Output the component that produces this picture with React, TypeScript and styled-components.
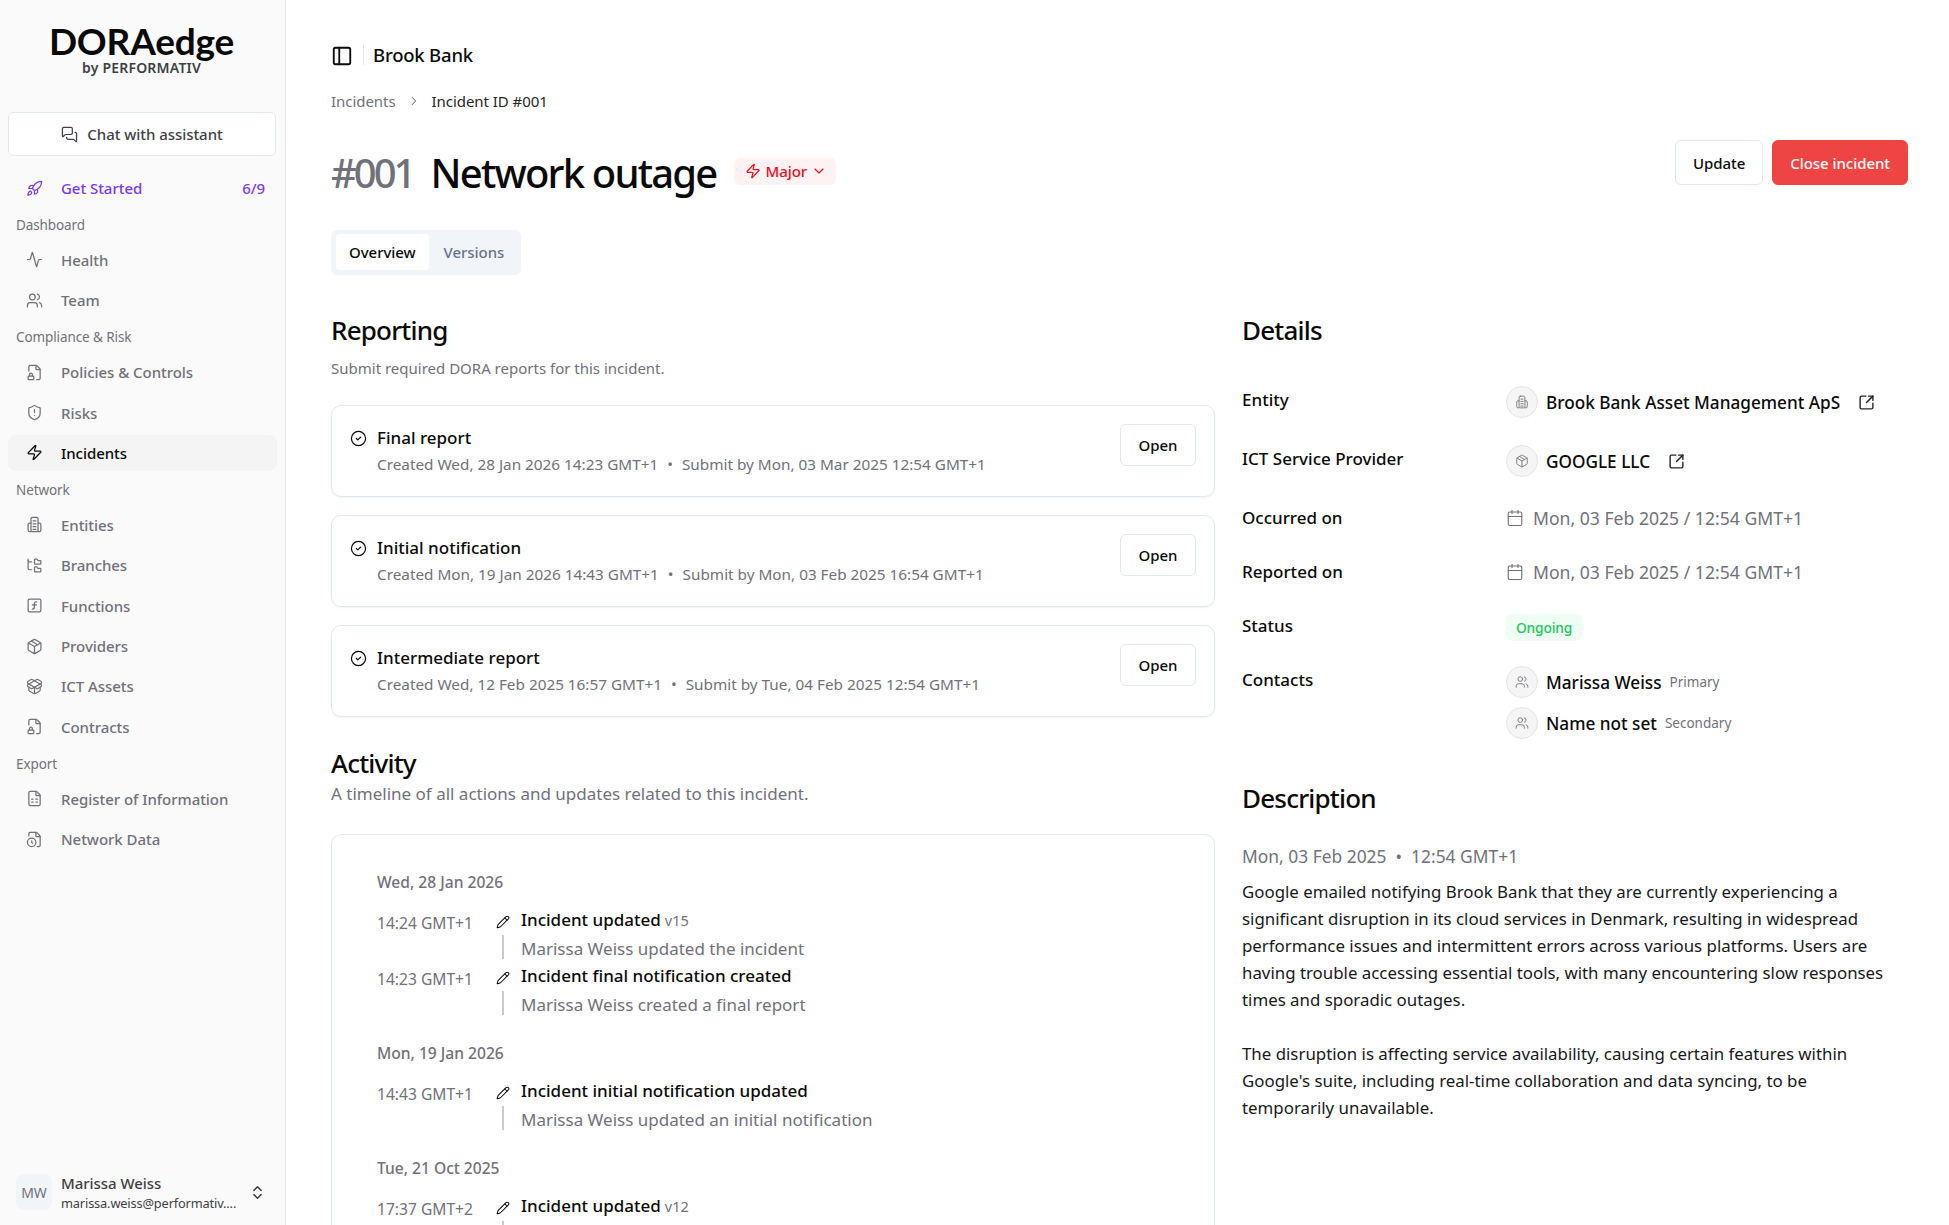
import React from 'react';
import styled, { createGlobalStyle } from 'styled-components';
import {
  Activity,
  Calendar,
  ChevronDown,
  ChevronRight,
  ChevronsUpDown,
  CircleCheck,
  FileClock,
  FileLock2,
  FileSpreadsheet,
  FolderTree,
  MessagesSquare,
  Package,
  PackageOpen,
  PanelLeft,
  Pencil,
  Rocket,
  ShieldAlert,
  SquareArrowOutUpRight,
  SquareFunction,
  Users,
  Zap,
} from 'lucide-react';

const GlobalStyle = createGlobalStyle`
  html, body, #root {
    margin: 0;
    height: 100%;
  }
  body {
    font-family: 'Noto Sans', 'Open Sans', sans-serif;
    color: #0a0a0a;
    background: #ffffff;
    overflow: hidden;
  }
  * {
    box-sizing: border-box;
  }
`;

const Page = styled.div`
  display: flex;
  height: 1225px;
  overflow: hidden;
`;

const Sidebar = styled.aside`
  width: 286px;
  flex: none;
  display: flex;
  flex-direction: column;
  background: #fafafa;
  border-right: 1px solid #e5e5e5;
  padding: 0 8px;
`;

const Logo = styled.div`
  height: 112px;
  padding-top: 23px;
  padding-right: 2px;
  display: flex;
  flex-direction: column;
  align-items: center;
`;

const LogoMark = styled.div`
  font-family: 'Lato', sans-serif;
  font-size: 37px;
  line-height: 36px;
  font-weight: 700;
  color: #0a0a0a;
  letter-spacing: -0.2px;
`;

const LogoSub = styled.div`
  font-size: 14px;
  line-height: 18px;
  font-weight: 600;
  letter-spacing: 0.2px;
  color: #3f3f46;
`;

const ChatButton = styled.button`
  height: 44px;
  width: 268px;
  flex: none;
  display: flex;
  align-items: center;
  justify-content: center;
  gap: 9px;
  background: #ffffff;
  border: 1px solid #e2e8f0;
  border-radius: 6px;
  font: inherit;
  font-size: 15px;
  font-weight: 500;
  letter-spacing: -0.05px;
  color: #3f3f46;
`;

const NavList = styled.nav`
  display: flex;
  flex-direction: column;
  margin-top: 14px;
  flex: 1;
`;

const GroupLabel = styled.div`
  height: 31.5px;
  padding: 0 0 2px 8px;
  display: flex;
  align-items: center;
  font-size: 13.5px;
  letter-spacing: -0.1px;
  color: #71717a;
`;

const NavItem = styled.div<{ $active?: boolean; $accent?: boolean }>`
  height: 36px;
  flex: none;
  display: flex;
  align-items: center;
  gap: 18px;
  padding: 0 12px 0 18px;
  margin-bottom: 4.4px;
  border-radius: 8px;
  font-size: 15px;
  font-weight: 500;
  letter-spacing: -0.05px;
  color: ${(p) => (p.$accent ? '#7c3aed' : p.$active ? '#0a0a0a' : '#71717a')};
  background: ${(p) => (p.$active ? '#f4f4f5' : 'transparent')};

  svg {
    flex: none;
  }
`;

const NavCount = styled.span`
  margin-left: auto;
`;

const UserRow = styled.div`
  height: 64px;
  padding: 0 0 2px 8px;
  display: flex;
  align-items: center;
  gap: 9px;
  color: #3f3f46;
`;

const UserAvatar = styled.div`
  width: 36px;
  height: 36px;
  flex: none;
  border-radius: 8px;
  background: #f1f5f9;
  color: #71717a;
  font-size: 14px;
  display: flex;
  align-items: center;
  justify-content: center;
`;

const UserText = styled.div`
  width: 179px;
  flex: none;
  margin-top: 2px;
  display: flex;
  flex-direction: column;
`;

const UserName = styled.div`
  font-size: 15px;
  line-height: 20px;
  font-weight: 500;
  letter-spacing: -0.05px;
`;

const UserEmail = styled.div`
  font-size: 12.8px;
  line-height: 20px;
  letter-spacing: -0.15px;
  white-space: nowrap;
`;

const Main = styled.main`
  flex: 1;
  min-width: 0;
  padding: 0 41px 0 45px;
`;

const TopBar = styled.div`
  height: 110px;
  padding-top: 45px;
  display: flex;
  align-items: flex-start;
  gap: 10px;
`;

const TopTitle = styled.div`
  font-size: 18.5px;
  line-height: 20px;
  font-weight: 500;
  letter-spacing: -0.2px;
  border-left: 1px solid #e5e5e5;
  padding-left: 9px;
`;

const Breadcrumb = styled.div`
  height: 22px;
  margin-top: -20px;
  display: flex;
  align-items: center;
  gap: 11px;
  font-size: 15px;
  letter-spacing: -0.05px;
  color: #71717a;

  strong {
    font-weight: 400;
    color: #27272a;
  }
`;

const TitleRow = styled.div`
  height: 90.5px;
  margin-top: 28px;
  display: flex;
  align-items: flex-start;
  justify-content: space-between;
`;

const TitleLeft = styled.div`
  display: flex;
  align-items: center;
  gap: 18px;
  height: 50px;
  margin-top: 8px;
`;

const Title = styled.h1`
  margin: 0;
  font-size: 40px;
  line-height: 50px;
  font-weight: 500;
  letter-spacing: -1.8px;

  span {
    color: #71717a;
    letter-spacing: -3px;
    margin-right: 17px;
  }
`;

const SeverityBadge = styled.div`
  height: 27px;
  padding: 0 9px 0 11px;
  display: flex;
  align-items: center;
  gap: 4px;
  margin-top: -4px;
  border-radius: 6px;
  background: #fef2f2;
  color: #ee0a1a;
  font-size: 15px;
  font-weight: 500;
  letter-spacing: -0.05px;
`;

const Actions = styled.div`
  display: flex;
  gap: 9px;
`;

const ActionButton = styled.button<{ $danger?: boolean }>`
  height: 45px;
  padding: 0 17px;
  border-radius: 6px;
  border: 1px solid ${(p) => (p.$danger ? '#ef4444' : '#e2e8f0')};
  background: ${(p) => (p.$danger ? '#ef4444' : '#ffffff')};
  color: ${(p) => (p.$danger ? '#ffffff' : '#0a0a0a')};
  font: inherit;
  font-size: 15px;
  font-weight: 500;
  letter-spacing: -0.05px;
`;

const TabList = styled.div`
  width: 190px;
  height: 45px;
  margin-top: -1px;
  padding: 4px 5px;
  display: flex;
  background: #f1f5f9;
  border-radius: 6px;
`;

const TabItem = styled.div<{ $active?: boolean }>`
  height: 36px;
  padding: 0 13px 0 ${(p) => (p.$active ? '13px' : '15px')};
  display: flex;
  align-items: center;
  border-radius: 4px;
  font-size: 15px;
  font-weight: 500;
  letter-spacing: -0.05px;
  background: ${(p) => (p.$active ? '#ffffff' : 'transparent')};
  color: ${(p) => (p.$active ? '#0a0a0a' : '#64748b')};
`;

const Columns = styled.div`
  display: grid;
  grid-template-columns: 884px 1fr;
  column-gap: 27px;
  margin-top: 35px;
`;

const Column = styled.section`
  min-width: 0;
`;

const Heading = styled.h2`
  margin: 0;
  font-size: 26px;
  line-height: 40px;
  font-weight: 500;
  letter-spacing: -0.8px;
`;

const Subtext = styled.p<{ $large?: boolean }>`
  margin: ${(p) => (p.$large ? '1px 0 0' : '8px 0 0')};
  color: #71717a;
  font-size: ${(p) => (p.$large ? '17px' : '15px')};
  line-height: 20px;
`;

const ReportStack = styled.div`
  margin-top: 27px;
  display: flex;
  flex-direction: column;
  gap: 18px;
`;

const ReportCard = styled.div`
  height: 92px;
  padding: 0 18px;
  display: flex;
  align-items: center;
  justify-content: space-between;
  border: 1px solid #e2e8f0;
  border-radius: 10px;
  box-shadow: 0 1px 2px rgba(15, 23, 42, 0.05);
`;

const ReportBody = styled.div`
  display: flex;
  flex-direction: column;
  gap: 5px;
`;

const ReportTitle = styled.div`
  display: flex;
  align-items: center;
  gap: 10px;
  font-size: 17px;
  line-height: 22px;
  font-weight: 500;
`;

const ReportMeta = styled.div`
  padding-left: 27px;
  font-size: 15.3px;
  line-height: 20px;
  color: #71717a;
`;

const MetaDot = styled.span`
  margin: 0 9px;
`;

const OpenButton = styled.button`
  width: 76px;
  height: 42px;
  align-self: flex-start;
  margin-top: 18px;
  border: 1px solid #e2e8f0;
  border-radius: 6px;
  background: #ffffff;
  font: inherit;
  font-size: 15px;
  font-weight: 500;
  letter-spacing: -0.05px;
  color: #0a0a0a;
`;

const ActivitySection = styled.div`
  margin-top: 26px;
`;

const TimelineCard = styled.div`
  margin-top: 30px;
  padding: 37px 45px 0;
  height: 600px;
  border: 1px solid #e2e8f0;
  border-radius: 10px;
`;

const DateGroup = styled.div`
  margin-bottom: 21.5px;
`;

const DateLabel = styled.div`
  font-size: 15.6px;
  line-height: 20px;
  font-weight: 500;
  color: #71717a;
  margin-bottom: 17.5px;
`;

const EventRow = styled.div`
  display: grid;
  grid-template-columns: 118px 26px 1fr;
  height: 56px;
`;

const EventTime = styled.div`
  font-size: 15.6px;
  line-height: 22px;
  color: #71717a;
  padding-top: 3px;
`;

const EventRail = styled.div`
  display: flex;
  flex-direction: column;
  align-items: flex-start;
  gap: 6px;

  svg {
    margin-top: 6px;
    margin-left: 1px;
  }
`;

const RailLine = styled.div`
  width: 2px;
  height: 24px;
  margin-left: 7px;
  background: #c9c9ce;
`;

const EventTitle = styled.div`
  font-size: 17px;
  line-height: 22px;
  font-weight: 500;

  span {
    font-size: 14.5px;
    font-weight: 400;
    color: #71717a;
    margin-left: 4px;
  }
`;

const EventText = styled.div`
  margin-top: 7px;
  font-size: 17px;
  line-height: 22px;
  color: #71717a;
`;

const DetailGrid = styled.div`
  margin-top: 39.5px;
  display: grid;
  grid-template-columns: 264px 1fr;
`;

const DetailLabel = styled.div<{ $h: number }>`
  height: ${(p) => p.$h}px;
  font-size: 17px;
  line-height: 22px;
  font-weight: 500;
`;

const DetailValue = styled.div<{ $h: number }>`
  height: ${(p) => p.$h}px;
  display: flex;
  flex-direction: column;
  gap: 9px;
  align-items: flex-start;
`;

const ValueLine = styled.div`
  display: flex;
  align-items: center;
  gap: 8px;
  margin-top: -3px;
  font-size: 17.2px;
  font-weight: 500;

  & + & {
    margin-top: 0;
  }

  small {
    font-size: 13.5px;
    font-weight: 400;
    color: #71717a;
  }

  a {
    margin-left: 10px;
    display: flex;
    color: #27272a;
  }
`;

const DateValue = styled.div`
  display: flex;
  align-items: center;
  gap: 9px;
  height: 22px;
  font-size: 17.6px;
  color: #71717a;
`;

const IconCircle = styled.div`
  width: 32px;
  height: 32px;
  flex: none;
  border-radius: 50%;
  border: 1px solid #e5e5e5;
  background: #f5f5f5;
  color: #71717a;
  display: flex;
  align-items: center;
  justify-content: center;
`;

const StatusBadge = styled.div`
  width: 76px;
  height: 27px;
  margin-top: -1px;
  display: flex;
  align-items: center;
  justify-content: center;
  border-radius: 6px;
  background: #f0fdf4;
  color: #22c55e;
  font-size: 13.8px;
  font-weight: 500;
  letter-spacing: -0.2px;
`;

const DescriptionSection = styled.div`
  margin-top: 23px;
`;

const DescriptionMeta = styled.div`
  margin-top: 27px;
  font-size: 17.4px;
  line-height: 22px;
  color: #71717a;
`;

const DescriptionText = styled.p`
  margin: 11px 0 27px;
  max-width: 655px;
  font-size: 16.85px;
  line-height: 27px;
  color: #18181b;
`;

// tower with two side wings, lucide has no exact match
const EntityIcon: React.FC<{ size?: number; strokeWidth?: number }> = ({ size = 17, strokeWidth = 1.5 }) => (
  <svg
    width={size}
    height={size}
    viewBox="0 0 24 24"
    fill="none"
    stroke="currentColor"
    strokeWidth={strokeWidth}
    strokeLinecap="round"
    strokeLinejoin="round"
  >
    <rect x="7" y="2" width="10" height="20" rx="2" />
    <path d="M7 10H5a2 2 0 0 0-2 2v8a2 2 0 0 0 2 2h2" />
    <path d="M17 10h2a2 2 0 0 1 2 2v8a2 2 0 0 1-2 2h-2" />
    <path d="M10 7h4M10 11h4M10 15h4M10 19h4" />
  </svg>
);

type NavEntry = { label: string; icon: React.ElementType; active?: boolean };

const navGroups: { title: string; items: NavEntry[] }[] = [
  {
    title: 'Dashboard',
    items: [
      { label: 'Health', icon: Activity },
      { label: 'Team', icon: Users },
    ],
  },
  {
    title: 'Compliance & Risk',
    items: [
      { label: 'Policies & Controls', icon: FileLock2 },
      { label: 'Risks', icon: ShieldAlert },
      { label: 'Incidents', icon: Zap, active: true },
    ],
  },
  {
    title: 'Network',
    items: [
      { label: 'Entities', icon: EntityIcon },
      { label: 'Branches', icon: FolderTree },
      { label: 'Functions', icon: SquareFunction },
      { label: 'Providers', icon: Package },
      { label: 'ICT Assets', icon: PackageOpen },
      { label: 'Contracts', icon: FileLock2 },
    ],
  },
  {
    title: 'Export',
    items: [
      { label: 'Register of Information', icon: FileSpreadsheet },
      { label: 'Network Data', icon: FileClock },
    ],
  },
];

const reports = [
  {
    title: 'Final report',
    created: 'Created Wed, 28 Jan 2026 14:23 GMT+1',
    submit: 'Submit by Mon, 03 Mar 2025 12:54 GMT+1',
  },
  {
    title: 'Initial notification',
    created: 'Created Mon, 19 Jan 2026 14:43 GMT+1',
    submit: 'Submit by Mon, 03 Feb 2025 16:54 GMT+1',
  },
  {
    title: 'Intermediate report',
    created: 'Created Wed, 12 Feb 2025 16:57 GMT+1',
    submit: 'Submit by Tue, 04 Feb 2025 12:54 GMT+1',
  },
];

type TimelineEvent = { time: string; title: string; version?: string; text?: string };

const timeline: { date: string; events: TimelineEvent[] }[] = [
  {
    date: 'Wed, 28 Jan 2026',
    events: [
      { time: '14:24 GMT+1', title: 'Incident updated', version: 'v15', text: 'Marissa Weiss updated the incident' },
      { time: '14:23 GMT+1', title: 'Incident final notification created', text: 'Marissa Weiss created a final report' },
    ],
  },
  {
    date: 'Mon, 19 Jan 2026',
    events: [
      { time: '14:43 GMT+1', title: 'Incident initial notification updated', text: 'Marissa Weiss updated an initial notification' },
    ],
  },
  {
    date: 'Tue, 21 Oct 2025',
    events: [{ time: '17:37 GMT+2', title: 'Incident updated', version: 'v12' }],
  },
];

const App: React.FC = () => {
  return (
    <Page>
      <GlobalStyle />
      <Sidebar>
        <Logo>
          <LogoMark>DORAedge</LogoMark>
          <LogoSub>by PERFORMATIV</LogoSub>
        </Logo>
        <ChatButton>
          <MessagesSquare size={17} strokeWidth={1.75} />
          Chat with assistant
        </ChatButton>
        <NavList>
          <NavItem $accent>
            <Rocket size={17} strokeWidth={1.75} />
            Get Started
            <NavCount>6/9</NavCount>
          </NavItem>
          {navGroups.map((group) => (
            <React.Fragment key={group.title}>
              <GroupLabel>{group.title}</GroupLabel>
              {group.items.map((item) => (
                <NavItem key={item.label} $active={item.active}>
                  <item.icon size={17} strokeWidth={1.75} />
                  {item.label}
                </NavItem>
              ))}
            </React.Fragment>
          ))}
        </NavList>
        <UserRow>
          <UserAvatar>MW</UserAvatar>
          <UserText>
            <UserName>Marissa Weiss</UserName>
            <UserEmail>marissa.weiss@performativ....</UserEmail>
          </UserText>
          <ChevronsUpDown size={17} strokeWidth={2} />
        </UserRow>
      </Sidebar>

      <Main>
        <TopBar>
          <PanelLeft size={22} strokeWidth={2} />
          <TopTitle>Brook Bank</TopTitle>
        </TopBar>
        <Breadcrumb>
          Incidents
          <ChevronRight size={14} strokeWidth={1.75} />
          <strong>Incident ID #001</strong>
        </Breadcrumb>

        <TitleRow>
          <TitleLeft>
            <Title>
              <span>#001</span>Network outage
            </Title>
            <SeverityBadge>
              <Zap size={16} strokeWidth={1.75} />
              Major
              <ChevronDown size={16} strokeWidth={1.75} />
            </SeverityBadge>
          </TitleLeft>
          <Actions>
            <ActionButton>Update</ActionButton>
            <ActionButton $danger>Close incident</ActionButton>
          </Actions>
        </TitleRow>

        <TabList>
          <TabItem $active>Overview</TabItem>
          <TabItem>Versions</TabItem>
        </TabList>

        <Columns>
          <Column>
            <Heading>Reporting</Heading>
            <Subtext>Submit required DORA reports for this incident.</Subtext>
            <ReportStack>
              {reports.map((report) => (
                <ReportCard key={report.title}>
                  <ReportBody>
                    <ReportTitle>
                      <CircleCheck size={17} strokeWidth={1.75} />
                      {report.title}
                    </ReportTitle>
                    <ReportMeta>
                      {report.created}
                      <MetaDot>•</MetaDot>
                      {report.submit}
                    </ReportMeta>
                  </ReportBody>
                  <OpenButton>Open</OpenButton>
                </ReportCard>
              ))}
            </ReportStack>

            <ActivitySection>
              <Heading>Activity</Heading>
              <Subtext $large>A timeline of all actions and updates related to this incident.</Subtext>
              <TimelineCard>
                {timeline.map((group) => (
                  <DateGroup key={group.date}>
                    <DateLabel>{group.date}</DateLabel>
                    {group.events.map((event) => (
                      <EventRow key={event.time}>
                        <EventTime>{event.time}</EventTime>
                        <EventRail>
                          <Pencil size={14} strokeWidth={1.75} />
                          <RailLine />
                        </EventRail>
                        <div>
                          <EventTitle>
                            {event.title}
                            {event.version && <span>{event.version}</span>}
                          </EventTitle>
                          {event.text && <EventText>{event.text}</EventText>}
                        </div>
                      </EventRow>
                    ))}
                  </DateGroup>
                ))}
              </TimelineCard>
            </ActivitySection>
          </Column>

          <Column>
            <Heading>Details</Heading>
            <DetailGrid>
              <DetailLabel $h={59}>Entity</DetailLabel>
              <DetailValue $h={59}>
                <ValueLine>
                  <IconCircle><EntityIcon size={14} strokeWidth={1.5} /></IconCircle>
                  Brook Bank Asset Management ApS
                  <a><SquareArrowOutUpRight size={17} strokeWidth={2} /></a>
                </ValueLine>
              </DetailValue>
              <DetailLabel $h={59}>ICT Service Provider</DetailLabel>
              <DetailValue $h={59}>
                <ValueLine>
                  <IconCircle><Package size={14} strokeWidth={1.5} /></IconCircle>
                  GOOGLE LLC
                  <a><SquareArrowOutUpRight size={17} strokeWidth={2} /></a>
                </ValueLine>
              </DetailValue>
              <DetailLabel $h={54}>Occurred on</DetailLabel>
              <DetailValue $h={54}>
                <DateValue><Calendar size={18} strokeWidth={1.5} />Mon, 03 Feb 2025 / 12:54 GMT+1</DateValue>
              </DetailValue>
              <DetailLabel $h={54}>Reported on</DetailLabel>
              <DetailValue $h={54}>
                <DateValue><Calendar size={18} strokeWidth={1.5} />Mon, 03 Feb 2025 / 12:54 GMT+1</DateValue>
              </DetailValue>
              <DetailLabel $h={54}>Status</DetailLabel>
              <DetailValue $h={54}>
                <StatusBadge>Ongoing</StatusBadge>
              </DetailValue>
              <DetailLabel $h={86}>Contacts</DetailLabel>
              <DetailValue $h={86}>
                <ValueLine>
                  <IconCircle><Users size={14} strokeWidth={1.5} /></IconCircle>
                  Marissa Weiss <small>Primary</small>
                </ValueLine>
                <ValueLine>
                  <IconCircle><Users size={14} strokeWidth={1.5} /></IconCircle>
                  Name not set <small>Secondary</small>
                </ValueLine>
              </DetailValue>
            </DetailGrid>

            <DescriptionSection>
              <Heading>Description</Heading>
              <DescriptionMeta>Mon, 03 Feb 2025 &nbsp;•&nbsp; 12:54 GMT+1</DescriptionMeta>
              <DescriptionText>
                Google emailed notifying Brook Bank that they are currently experiencing a significant disruption in its cloud services in Denmark, resulting in widespread performance issues and intermittent errors across various platforms. Users are having trouble accessing essential tools, with many encountering slow responses times and sporadic outages.
              </DescriptionText>
              <DescriptionText>
                The disruption is affecting service availability, causing certain features within Google's suite, including real-time collaboration and data syncing, to be temporarily unavailable.
              </DescriptionText>
            </DescriptionSection>
          </Column>
        </Columns>
      </Main>
    </Page>
  );
};

export default App;
